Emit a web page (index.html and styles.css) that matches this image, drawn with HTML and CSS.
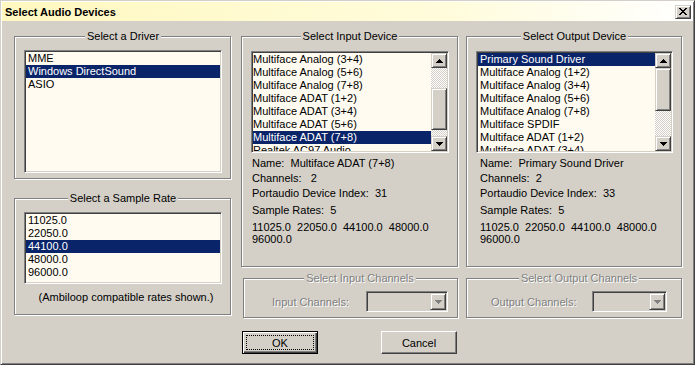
FILE: index.html
```html
<!DOCTYPE html>
<html lang="en">
<head>
    <meta charset="UTF-8">
    <title>Select Audio Devices</title>
    <link rel="stylesheet" href="styles.css">
</head>
<body>
    <div class="window">
        <!-- Title bar -->
        <div class="titlebar">
            <span class="title">Select Audio Devices</span>
            <div class="close raised">
                <svg width="8" height="7" viewBox="0 0 8 7"><path d="M0 0h2v1h-2zM6 0h2v1h-2zM1 1h2v1h-2zM5 1h2v1h-2zM2 2h4v1h-4zM3 3h2v1h-2zM2 4h4v1h-4zM1 5h2v1h-2zM5 5h2v1h-2zM0 6h2v1h-2zM6 6h2v1h-2z" fill="#000"/></svg>
            </div>
        </div>

        <div class="content">
            <!-- Left column: driver and sample rate -->
            <div class="col col-left">
                <div class="group group-driver">
                    <div class="group-title">Select a Driver</div>
                    <div class="listbox list-driver">
                        <div class="item">MME</div>
                        <div class="item selected">Windows DirectSound</div>
                        <div class="item">ASIO</div>
                    </div>
                </div>

                <div class="group group-rate">
                    <div class="group-title">Select a Sample Rate</div>
                    <div class="listbox list-rate">
                        <div class="item">11025.0</div>
                        <div class="item">22050.0</div>
                        <div class="item selected">44100.0</div>
                        <div class="item">48000.0</div>
                        <div class="item">96000.0</div>
                    </div>
                    <div class="note">(Ambiloop compatible rates shown.)</div>
                </div>
            </div>

            <!-- Middle column: input device -->
            <div class="col col-mid">
                <div class="group group-device">
                    <div class="group-title">Select Input Device</div>
                    <div class="listbox list-device">
                        <div class="items">
                            <div class="item">Multiface Analog (3+4)</div>
                            <div class="item">Multiface Analog (5+6)</div>
                            <div class="item">Multiface Analog (7+8)</div>
                            <div class="item">Multiface ADAT (1+2)</div>
                            <div class="item">Multiface ADAT (3+4)</div>
                            <div class="item">Multiface ADAT (5+6)</div>
                            <div class="item selected">Multiface ADAT (7+8)</div>
                            <div class="item">Realtek AC97 Audio</div>
                        </div>
                        <div class="scrollbar">
                            <div class="sb-btn raised">
                                <svg width="7" height="4" viewBox="0 0 7 4"><path d="M3 0h1v1h-1zM2 1h3v1h-3zM1 2h5v1h-5zM0 3h7v1h-7z" fill="#000"/></svg>
                            </div>
                            <div class="sb-track">
                                <div class="sb-thumb raised thumb-in"></div>
                            </div>
                            <div class="sb-btn raised">
                                <svg width="7" height="4" viewBox="0 0 7 4"><path d="M0 0h7v1h-7zM1 1h5v1h-5zM2 2h3v1h-3zM3 3h1v1h-1z" fill="#000"/></svg>
                            </div>
                        </div>
                    </div>
                    <div class="info info-in">
                        <div>Name:  Multiface ADAT (7+8)</div>
                        <div>Channels:   2</div>
                        <div>Portaudio Device Index:  31</div>
                        <div class="rate-count">Sample Rates:  5</div>
                        <div class="rates">11025.0  22050.0  44100.0  48000.0<br>96000.0</div>
                    </div>
                </div>

                <div class="group group-channels channels-in">
                    <div class="group-title disabled">Select Input Channels</div>
                    <div class="channel-row">
                        <span class="disabled">Input Channels:</span>
                        <div class="combo combo-in">
                            <div class="combo-btn raised">
                                <svg width="7" height="4" viewBox="0 0 7 4"><path d="M0 0h7v1h-7zM1 1h5v1h-5zM2 2h3v1h-3zM3 3h1v1h-1z" fill="#808080"/></svg>
                            </div>
                        </div>
                    </div>
                </div>

                <div class="buttons">
                    <button class="btn btn-default">OK</button>
                    <button class="btn">Cancel</button>
                </div>
            </div>

            <!-- Right column: output device -->
            <div class="col col-right">
                <div class="group group-device">
                    <div class="group-title">Select Output Device</div>
                    <div class="listbox list-device">
                        <div class="items items-out">
                            <div class="item selected">Primary Sound Driver</div>
                            <div class="item">Multiface Analog (1+2)</div>
                            <div class="item">Multiface Analog (3+4)</div>
                            <div class="item">Multiface Analog (5+6)</div>
                            <div class="item">Multiface Analog (7+8)</div>
                            <div class="item">Multiface SPDIF</div>
                            <div class="item">Multiface ADAT (1+2)</div>
                            <div class="item">Multiface ADAT (3+4)</div>
                        </div>
                        <div class="scrollbar">
                            <div class="sb-btn raised">
                                <svg width="7" height="4" viewBox="0 0 7 4"><path d="M3 0h1v1h-1zM2 1h3v1h-3zM1 2h5v1h-5zM0 3h7v1h-7z" fill="#000"/></svg>
                            </div>
                            <div class="sb-track">
                                <div class="sb-thumb raised thumb-out"></div>
                            </div>
                            <div class="sb-btn raised">
                                <svg width="7" height="4" viewBox="0 0 7 4"><path d="M0 0h7v1h-7zM1 1h5v1h-5zM2 2h3v1h-3zM3 3h1v1h-1z" fill="#000"/></svg>
                            </div>
                        </div>
                    </div>
                    <div class="info info-out">
                        <div>Name:  Primary Sound Driver</div>
                        <div>Channels:  2</div>
                        <div>Portaudio Device Index:  33</div>
                        <div class="rate-count">Sample Rates:  5</div>
                        <div class="rates">11025.0  22050.0  44100.0  48000.0<br>96000.0</div>
                    </div>
                </div>

                <div class="group group-channels channels-out">
                    <div class="group-title disabled">Select Output Channels</div>
                    <div class="channel-row">
                        <span class="disabled">Output Channels:</span>
                        <div class="combo combo-out">
                            <div class="combo-btn raised">
                                <svg width="7" height="4" viewBox="0 0 7 4"><path d="M0 0h7v1h-7zM1 1h5v1h-5zM2 2h3v1h-3zM3 3h1v1h-1z" fill="#808080"/></svg>
                            </div>
                        </div>
                    </div>
                </div>
            </div>
        </div>
    </div>
</body>
</html>
```
FILE: styles.css
```css
/* Classic dialog look */
body {
    margin: 0;
    font-family: "Liberation Sans", Arial, sans-serif;
    font-size: 11px;
    color: #000;
    background-color: #d4d0c8;
}

.window {
    width: 695px;
    height: 365px;
    box-sizing: border-box;
    border: 1px solid;
    border-color: #d4d0c8 #404040 #404040 #d4d0c8;
    padding: 1px;
    box-shadow: inset 1px 1px #fff, inset -1px -1px #808080;
    background-color: #d4d0c8;
}

/* Title bar */
.titlebar {
    height: 19px;
    display: flex;
    align-items: center;
    justify-content: space-between;
    padding: 0 2px 0 3px;
    background: linear-gradient(to right, #fff8c0, #fffcdc 65%, #ffffff);
}

.title {
    font-weight: bold;
    padding-top: 1px;
}

.close {
    width: 16px;
    height: 14px;
    display: flex;
    align-items: center;
    justify-content: center;
}

/* 3D raised bevel (scroll buttons, thumb) */
.raised {
    box-sizing: border-box;
    background-color: #d4d0c8;
    border: 1px solid;
    border-color: #d4d0c8 #404040 #404040 #d4d0c8;
    box-shadow: inset 1px 1px #fff, inset -1px -1px #808080;
}

/* Columns */
.content {
    display: flex;
    padding: 15px 0 0 12px;
}

.col {
    display: flex;
    flex-direction: column;
}

.col-left {
    width: 217px;
    margin-right: 10px;
}

.col-mid {
    width: 217px;
    margin-right: 8px;
}

.col-right {
    width: 216px;
}

/* Group boxes */
.group {
    box-sizing: border-box;
    border: 1px solid #808080;
    box-shadow: 1px 1px 0 #fff, inset 1px 1px 0 #fff;
    display: flex;
    flex-direction: column;
    padding: 0 8px 0 9px;
}

.group-title {
    align-self: center;
    margin-top: -7px;
    padding: 0 2px;
    line-height: 13px;
    background-color: #d4d0c8;
    white-space: nowrap;
}

.disabled {
    color: #808080;
    text-shadow: 1px 1px 0 #fff;
}

.group-driver {
    height: 143px;
}

.group-rate {
    height: 117px;
    margin-top: 19px;
}

.group-device {
    height: 231px;
}

/* List boxes */
.listbox {
    box-sizing: border-box;
    border: 1px solid;
    border-color: #808080 #fff #fff #808080;
    padding: 1px;
    box-shadow: inset 1px 1px #404040, inset -1px -1px #d4d0c8;
    background-color: #fffbf0;
    overflow: hidden;
}

.list-driver {
    height: 123px;
    margin-top: 7px;
}

.list-rate {
    height: 72px;
    margin-top: 7px;
}

.list-device {
    display: flex;
    height: 102px;
    margin-top: 8px;
}

.item {
    height: 13px;
    line-height: 13px;
    padding-left: 2px;
    white-space: nowrap;
}

.item.selected {
    background-color: #0a246a;
    color: #fff;
}

.items {
    flex: 1;
    overflow: hidden;
}

.items .item {
    padding-left: 0;
}

.items-out .item {
    padding-left: 2px;
}

.note {
    margin-top: 7px;
    line-height: 13px;
    text-align: center;
    padding-left: 6px;
}

/* Scrollbar */
.scrollbar {
    width: 16px;
    display: flex;
    flex-direction: column;
}

.sb-btn {
    height: 15px;
    display: flex;
    align-items: center;
    justify-content: center;
}

.sb-track {
    flex: 1;
    display: flex;
    flex-direction: column;
    background: repeating-conic-gradient(#d4d0c8 0 25%, #fff 0 50%) 0 0 / 2px 2px;
}

.thumb-in {
    margin-top: 20px;
    height: 42px;
}

.thumb-out {
    height: 43px;
}

/* Device info text */
.info {
    margin-top: 4px;
    display: flex;
    flex-direction: column;
    gap: 2px;
    line-height: 13px;
    white-space: pre;
}

.info-in {
    padding-left: 1px;
}

.info-out {
    padding-left: 4px;
}

.info .rate-count {
    margin-top: 2px;
}

.info .rates {
    margin-top: 2px;
    line-height: 12px;
}

/* Channel pickers */
.group-channels {
    height: 40px;
    margin-top: 11px;
}

.channels-in {
    margin-left: 2px;
    padding: 0 9px 0 28px;
}

.channels-out {
    padding: 0 14px 0 24px;
}

.channel-row {
    display: flex;
    align-items: center;
    justify-content: space-between;
    margin-top: 6px;
}

.combo {
    box-sizing: border-box;
    height: 21px;
    border: 1px solid;
    border-color: #808080 #fff #fff #808080;
    padding: 1px;
    box-shadow: inset 1px 1px #404040, inset -1px -1px #d4d0c8;
    display: flex;
    justify-content: flex-end;
}

.combo-in {
    width: 82px;
}

.combo-out {
    width: 75px;
}

.combo-btn {
    width: 16px;
    display: flex;
    align-items: center;
    justify-content: center;
}

/* Push buttons */
.buttons {
    display: flex;
    justify-content: space-between;
    margin-top: 13px;
    padding: 0 1px;
}

.btn {
    width: 76px;
    height: 23px;
    box-sizing: border-box;
    font-family: inherit;
    font-size: 11px;
    color: #000;
    background-color: #d4d0c8;
    border: 1px solid;
    border-color: #fff #404040 #404040 #fff;
    box-shadow: inset -1px -1px #808080;
    padding: 0;
}

.btn-default {
    border-color: #000;
    box-shadow: inset 1px 1px #fff, inset -1px -1px #404040, inset -2px -2px #808080;
    outline: 1px dotted #000;
    outline-offset: -5px;
}
```
